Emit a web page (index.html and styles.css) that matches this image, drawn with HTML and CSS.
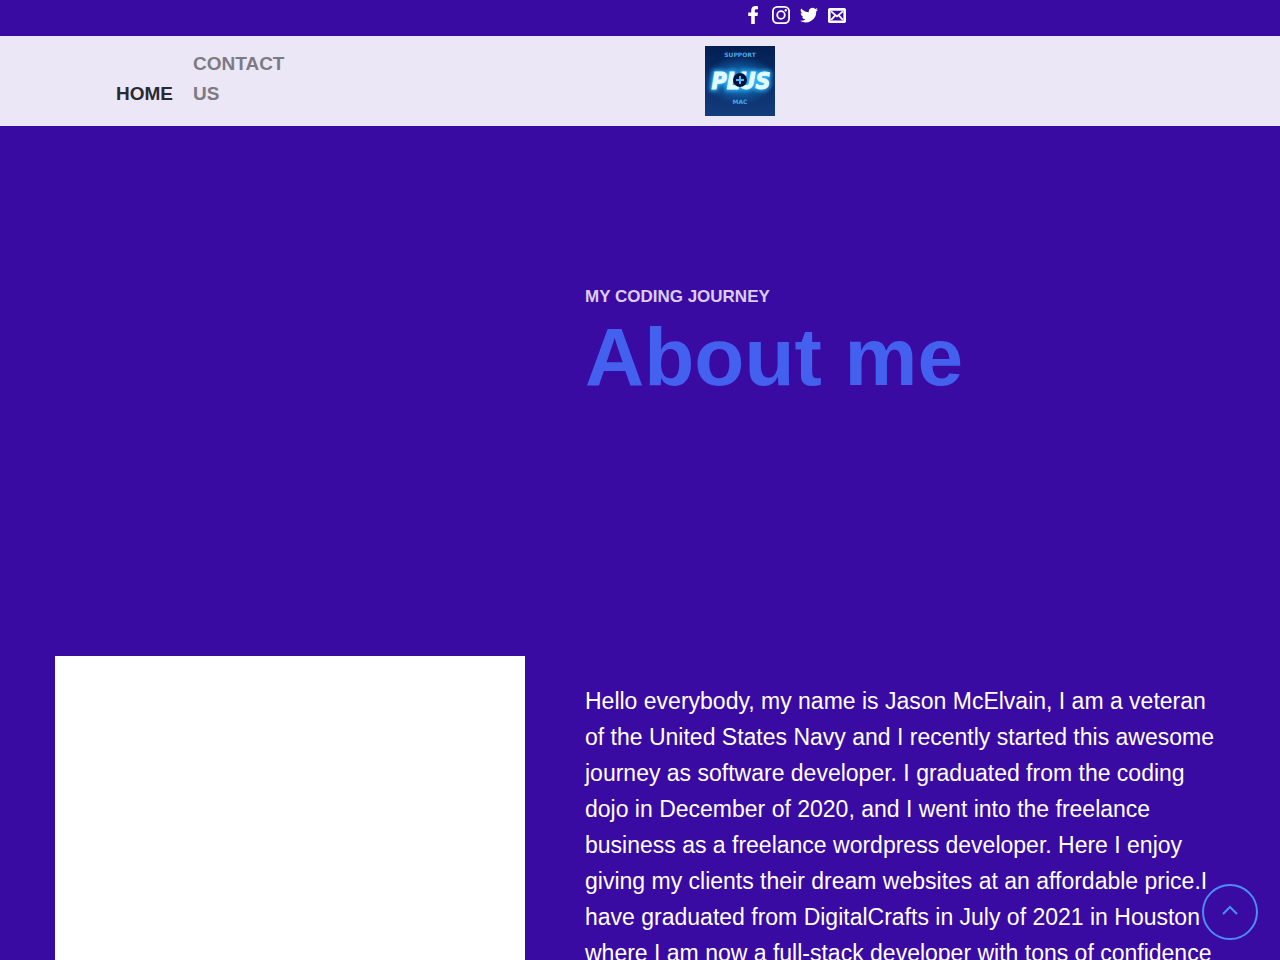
FILE: index.html
```
<!DOCTYPE html>
<html lang="en">
<head>
    <meta charset="UTF-8">
    <meta name="viewport" content="width=device-width, initial-scale=1">
    <title>About me</title>
    <link rel="stylesheet" href="styles.css">
</head>
<body>

    <div class="topbar">
        <div class="container split">
            <div class="social">
                <a href="#" aria-label="Facebook">
                    <svg viewBox="0 0 20 20"><path d="M12 20v-9h3l.5-3.800H12V5.200c0-1.100.4-1.700 1.800-1.700h1.700V.2C15 .1 14 0 12.900 0 10 0 8 1.700 8 4.700v2.500H4.700V11H8v9z"/></svg>
                </a>
                <a href="#" aria-label="Instagram">
                    <svg viewBox="0 0 20 20"><rect class="line" x="1" y="1" width="18" height="18" rx="5"/><circle class="line" cx="10" cy="10" r="4.200"/><circle cx="15.300" cy="4.700" r="1.300"/></svg>
                </a>
                <a href="#" aria-label="Twitter">
                    <svg viewBox="0 0 20 20"><path d="M20 3.900a8 8 0 0 1-2.400.6 4 4 0 0 0 1.800-2.200c-.8.5-1.700.8-2.600 1A4.100 4.100 0 0 0 9.800 7 11.700 11.700 0 0 1 1.400 2.700a4.100 4.100 0 0 0 1.300 5.500 4 4 0 0 1-1.900-.5c0 2 1.400 3.700 3.300 4.100-.6.200-1.200.2-1.900.1a4.100 4.100 0 0 0 3.900 2.800A8.300 8.300 0 0 1 0 16.400a11.700 11.700 0 0 0 18-10.400c.8-.6 1.500-1.300 2-2.100z"/></svg>
                </a>
                <a href="#" aria-label="Email">
                    <svg viewBox="0 0 20 20"><rect class="line thick" x="1.400" y="3.700" width="17.200" height="13.800" rx="1"/><path class="line" d="M3.500 6l6.500 5.500L16.500 6M3.500 15.500l4.500-5M16.500 15.500l-4.500-5"/></svg>
                </a>
            </div>
        </div>
    </div>

    <header class="header">
        <div class="container split">
            <nav class="nav">
                <a class="active" href="#">HOME</a>
                <a href="#">CONTACT US</a>
            </nav>
            <a class="logo" href="#" aria-label="Support Plus Mac">
                <svg viewBox="0 0 70 70">
                    <defs>
                        <linearGradient id="sky" x2="0" y2="1">
                            <stop offset="0" stop-color="#031f52"/>
                            <stop offset="1" stop-color="#123c7c"/>
                        </linearGradient>
                        <radialGradient id="halo">
                            <stop offset="0" stop-color="#1687d8"/>
                            <stop offset="1" stop-color="#1687d8" stop-opacity="0"/>
                        </radialGradient>
                        <filter id="glow" x="-20%" y="-40%" width="140%" height="180%">
                            <feGaussianBlur stdDeviation="2"/>
                        </filter>
                    </defs>
                    <rect width="70" height="70" fill="url(#sky)"/>
                    <ellipse cx="35" cy="34" rx="36" ry="24" fill="url(#halo)"/>
                    <text class="logo-small" x="35" y="11">SUPPORT</text>
                    <g class="logo-plus">
                        <text class="logo-glow" x="36" y="43" filter="url(#glow)">PLUS</text>
                        <text x="36" y="43">PLUS</text>
                    </g>
                    <circle cx="35" cy="34" r="7" fill="#03123a"/>
                    <path d="M35 30v8M31 34h8" stroke="#4bb9f5" stroke-width="2"/>
                    <text class="logo-small" x="35" y="58">MAC</text>
                </svg>
            </a>
        </div>
    </header>

    <main>
        <section class="hero">
            <div class="container columns">
                <div class="hero-text">
                    <p class="subtitle">MY CODING JOURNEY</p>
                    <h1>About me</h1>
                </div>
            </div>
        </section>

        <section class="container columns about">
            <div class="photo"></div>
            <p class="bio">Hello everybody, my name is Jason McElvain, I am a veteran of the United States Navy and I recently started this awesome journey as software developer. I graduated from the coding dojo in December of 2020, and I went into the freelance business as a freelance wordpress developer. Here I enjoy giving my clients their dream websites at an affordable price.I have graduated from DigitalCrafts in July of 2021 in Houston where I am now a full-stack developer with tons of confidence</p>
        </section>
    </main>

    <button class="to-top" type="button" aria-label="Back to top">
        <svg viewBox="0 0 16 10"><path d="M1 9l7-7 7 7"/></svg>
    </button>

    <script>
        document.querySelector('.to-top').addEventListener('click', function () {
            window.scrollTo({ top: 0, behavior: 'smooth' });
        });
    </script>
</body>
</html>
```
FILE: styles.css
```
* {
    box-sizing: border-box;
}
body {
    margin: 0;
    font-family: "Liberation Sans", Arial, sans-serif;
    background-color: #3a0ba3;
    color: white;
}
a {
    color: inherit;
    text-decoration: none;
}
svg {
    display: block;
}
h1, p {
    margin: 0;
}
.container {
    width: calc(100% - 40px);
    max-width: 1170px;
    margin: 0 auto;
}
.split {
    display: grid;
    grid-template-columns: 5fr 4fr;
    align-items: center;
}
.columns {
    display: grid;
    grid-template-columns: 47fr 64fr;
    column-gap: 60px;
}

/* top bar */
.topbar {
    padding: 6px 0 12px;
}
.social {
    grid-column: 2;
    display: flex;
    gap: 10px;
    padding-left: 39px;
}
.social svg {
    width: 18px;
    height: 18px;
    fill: white;
}
.social .line {
    fill: none;
    stroke: white;
    stroke-width: 2;
}
.social .thick {
    stroke-width: 3;
}

/* header */
.header {
    background-color: #ebe7f6;
    padding: 10px 0;
}
.nav {
    display: flex;
    align-items: flex-end;
    gap: 20px;
    padding: 0 0 4px 61px;
    font-size: 19px;
    font-weight: bold;
    line-height: 30px;
    color: #7d7a82;
}
.nav a {
    width: min-content;
}
.nav .active {
    color: #2c2a31;
}
.logo {
    width: 70px;
}
.logo-small {
    font: bold 6px "DejaVu Sans", sans-serif;
    text-anchor: middle;
    fill: #45a9e8;
}
.logo-plus text {
    font: italic bold 23px "DejaVu Sans Condensed", sans-serif;
    text-anchor: middle;
    fill: #e2fbff;
    stroke: #e2fbff;
    stroke-width: 1;
}
.logo-plus .logo-glow {
    fill: #2bb4ff;
    stroke: #2bb4ff;
    stroke-width: 4;
}

/* hero */
.hero {
    padding: 156px 0 254px;
}
.hero-text {
    grid-column: 2;
}
.subtitle {
    font-size: 17px;
    font-weight: bold;
    line-height: 30px;
    color: #dccdf7;
}
h1 {
    font-size: 82px;
    line-height: 90px;
    color: #4361ee;
}

/* about */
.photo {
    min-height: 470px;
    background-color: white;
}
.bio {
    padding-top: 27px;
    font-size: 23px;
    line-height: 36px;
}

.to-top {
    position: fixed;
    right: 22px;
    bottom: 20px;
    display: flex;
    justify-content: center;
    width: 56px;
    height: 56px;
    padding: 19px 0 0;
    border: 2px solid #4c8df5;
    border-radius: 50%;
    background: none;
    cursor: pointer;
}
.to-top svg {
    width: 16px;
    height: 10px;
    fill: none;
    stroke: #4c8df5;
    stroke-width: 2;
}
```
